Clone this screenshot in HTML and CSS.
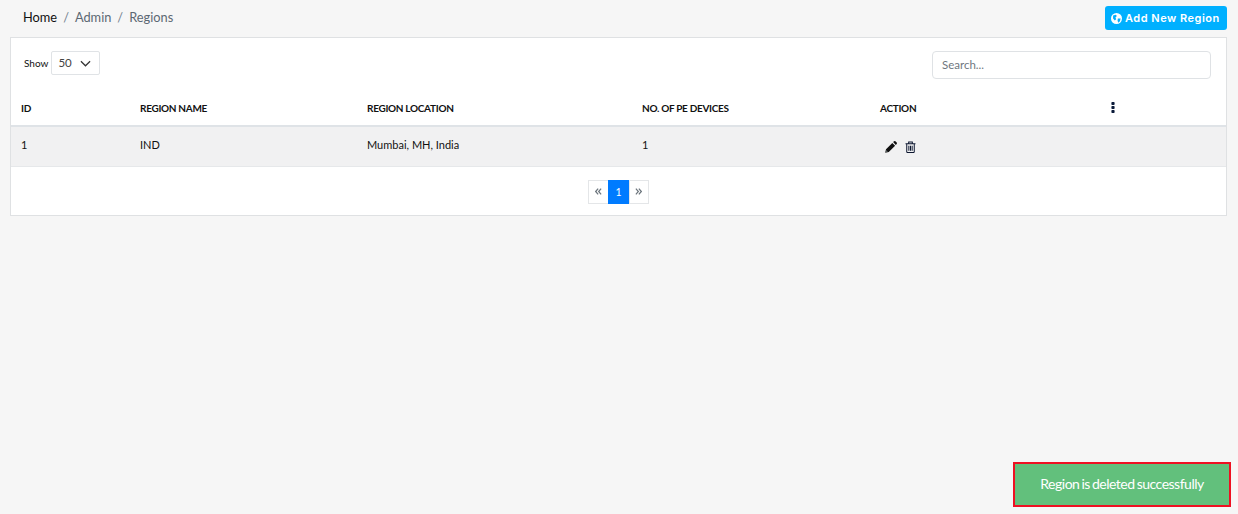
FILE: index.html
```html
<!DOCTYPE html>
<html lang="en">
<head>
<meta charset="utf-8">
<title>Regions</title>
<link rel="stylesheet" href="styles.css">
</head>
<body>
<div class="page">
  <header class="topbar">
    <nav class="crumbs">
      <span class="crumb-home">Home</span><span class="sep">/</span><span>Admin</span><span class="sep">/</span><span>Regions</span>
    </nav>
    <button class="add-btn" type="button">
      <svg class="globe" viewBox="0 0 16 16" width="11" height="11"><circle cx="8" cy="8" r="8" fill="#fff"/><path d="M3 3.5 7 2.5 8.5 4.5 6.5 6.5 7.5 9 5.5 11 3 8ZM10 8h4l-1 4-2.5 2-1-3Z" fill="#00b0ff"/></svg>
      Add New Region
    </button>
  </header>
  <section class="card">
    <div class="controls">
      <label class="show">Show
        <span class="select">50
          <svg viewBox="0 0 12 7" width="11" height="7"><path d="M1 1l5 5 5-5" fill="none" stroke="#333" stroke-width="1.3"/></svg>
        </span>
      </label>
      <input class="search" type="text" placeholder="Search...">
    </div>
    <table class="grid">
      <colgroup>
        <col class="c1"><col class="c2"><col class="c3"><col class="c4"><col class="c5"><col>
      </colgroup>
      <thead>
        <tr>
          <th>ID</th><th>REGION NAME</th><th>REGION LOCATION</th><th>NO. OF PE DEVICES</th><th>ACTION</th>
          <th><svg class="dots" viewBox="0 0 4 11" width="4" height="11"><rect x=".4" y="0" width="3.2" height="3" rx=".8"/><rect x=".4" y="4" width="3.2" height="3" rx=".8"/><rect x=".4" y="8" width="3.2" height="3" rx=".8"/></svg></th>
        </tr>
      </thead>
      <tbody>
        <tr>
          <td><span class="cell">1</span></td><td><span class="cell">IND</span></td><td><span class="cell">Mumbai, MH, India</span></td><td><span class="cell">1</span></td>
          <td>
            <span class="actions">
              <svg viewBox="0 0 12 12" width="12" height="12"><path d="M0.2 11.8 1 8.2 7.3 1.9 10.1 4.7 3.8 11ZM8.1 1.1 9.1.3a1 1 0 0 1 1.3 0l1.3 1.3a1 1 0 0 1 0 1.3l-.9 1Z" fill="#111"/><path d="M1.2 10.8 1.5 9.3 2.7 10.5Z" fill="#9aa"/></svg>
              <svg viewBox="0 0 12 13" width="11" height="12"><path d="M.6 2.9h10.8M4 2.6V1h4v1.6M1.9 3v8.6c0 .6.4 1 1 1h6.2c.6 0 1-.4 1-1V3M4.2 5v5.6M6 5v5.6M7.8 5v5.6" fill="none" stroke="#0d1730" stroke-width="1.1"/></svg>
            </span>
          </td>
          <td></td>
        </tr>
      </tbody>
    </table>
    <div class="pager">
      <span class="page-item page-prev">
        <svg viewBox="0 0 8 8" width="7" height="7"><path d="M3.6.8.8 4l2.8 3.2M7 .8 4.2 4 7 7.2" fill="none" stroke="#6c757d" stroke-width="1.4"/></svg>
      </span><span class="page-item active">1</span><span class="page-item page-next">
        <svg viewBox="0 0 8 8" width="7" height="7"><path d="M1 .8 3.8 4 1 7.2M4.4.8 7.2 4 4.4 7.2" fill="none" stroke="#6c757d" stroke-width="1.4"/></svg>
      </span>
    </div>
  </section>
</div>
<div class="toast">Region is deleted successfully</div>
</body>
</html>
```
FILE: styles.css
```css
* { box-sizing: border-box; }
html, body { margin: 0; height: 100%; }
body {
  background: #f6f6f6;
  font-family: Lato, "Liberation Sans", sans-serif;
  color: #111;
  overflow: hidden;
}
.page { padding: 6px 11px 0 10px; }
.topbar {
  display: flex;
  justify-content: space-between;
  align-items: flex-start;
  height: 31px;
}
.crumbs {
  display: flex;
  padding: 3px 0 0 13px;
  font-size: 12.8px;
  line-height: 17px;
  color: #5c6873;
}
.crumb-home { color: #111; }
.sep { padding: 0 6px; color: #73818f; }
.add-btn {
  display: flex;
  align-items: center;
  gap: 3px;
  width: 122px;
  height: 24px;
  padding: 0 0 0 6px;
  border: 0;
  border-radius: 3px;
  background: #00b0ff;
  color: #fff;
  font-family: Inter, sans-serif;
  font-size: 11px;
  font-weight: 600;
  letter-spacing: .5px;
  white-space: nowrap;
}
.card {
  height: 179px;
  background: #fff;
  border: 1px solid #dfe1e3;
}
.controls {
  display: flex;
  justify-content: space-between;
  padding: 13px 15px 0 13px;
  height: 53px;
}
.show {
  display: flex;
  align-items: flex-start;
  gap: 3px;
  font-size: 10px;
  line-height: 24px;
}
.select {
  display: flex;
  align-items: center;
  justify-content: space-between;
  width: 49px;
  height: 24px;
  padding: 0 8px 0 6px;
  border: 1px solid #e0e3e6;
  border-radius: 2px;
  font-size: 11.5px;
  color: #444;
}
.search {
  width: 279px;
  height: 28px;
  padding: 0 9px 2px;
  border: 1px solid #dfe2e5;
  border-radius: 4px;
  font: 11.5px Lato, sans-serif;
  outline: 0;
}
.search::placeholder { color: #6f7780; opacity: 1; }
.grid {
  width: 100%;
  border-collapse: collapse;
  table-layout: fixed;
  font-size: 11px;
}
.c1 { width: 119px; }
.c2 { width: 227px; }
.c3 { width: 275px; }
.c4 { width: 238px; }
.c5 { width: 232px; }
.grid th {
  height: 35px;
  padding: 0 10px;
  text-align: left;
  font-size: 10px;
  font-weight: 700;
  letter-spacing: -.3px;
  border-bottom: 2px solid #dfe3e7;
}
.grid td {
  height: 40px;
  padding: 0 10px;
  background: #f1f1f2;
  border-bottom: 1px solid #e6e8ea;
}
.cell { display: block; padding-bottom: 4px; }
.dots { display: block; fill: #0b1b3a; margin: 0 0 2px -1px; }
.actions { display: flex; gap: 8px; align-items: center; padding: 1px 0 0 5px; }
.pager {
  display: flex;
  justify-content: center;
  padding-top: 13px;
}
.page-item {
  display: flex;
  align-items: center;
  justify-content: center;
  height: 24px;
  border: 1px solid #e4e6e8;
  margin-left: -1px;
  font-size: 10.5px;
}
.page-prev { width: 21px; }
.page-next { width: 20px; }
.page-item.active {
  width: 22px;
  background: #007bff;
  border-color: #007bff;
  color: #fff;
}
.toast {
  position: fixed;
  left: 1013px;
  top: 462px;
  width: 218px;
  height: 45px;
  background: #62c07c;
  border: 2px solid #ee1122;
  color: #fff;
  font-size: 14px;
  letter-spacing: -.5px;
  word-spacing: -1px;
  line-height: 39px;
  text-align: center;
}
```
